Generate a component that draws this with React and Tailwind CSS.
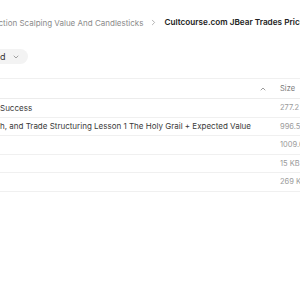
import React from 'react';
import { ChevronDown, ChevronUp, ChevronRight } from 'lucide-react';

const rows = [
  { name: 'Success', size: '277.2 KB' },
  { name: 'h, and Trade Structuring Lesson 1 The Holy Grail + Expected Value', size: '996.5 KB' },
  { name: '', size: '1009.6 KB' },
  { name: '', size: '15 KB' },
  { name: '', size: '269 KB' },
];

export default function App() {
  return (
    <div className="w-[300px] h-[300px] bg-white overflow-hidden font-['Inter',sans-serif]">
      {/* Breadcrumb */}
      <div className="h-[44px] flex items-center whitespace-nowrap -ml-[7px] pt-[1px]">
        <span className="text-[8px] text-[#8b8b8b]">Action Scalping Value And Candlesticks</span>
        <ChevronRight className="w-[9px] h-[9px] ml-[6px] mr-[6px] text-[#9a9a9a] shrink-0" strokeWidth={2} />
        <span className="text-[8.2px] font-semibold text-[#222]">Cultcourse.com JBear Trades Price Action</span>
      </div>

      {/* Filter pill */}
      <div className="h-[34px] flex items-start pt-[5px]">
        <div className="flex items-center gap-[6px] h-[15px] pl-[10px] pr-[8px] -ml-[10px] rounded-full bg-[#f3f3f3] text-[9px] text-[#333]">
          <span>d</span>
          <ChevronDown className="w-[8px] h-[8px] text-[#777]" strokeWidth={2} />
        </div>
      </div>

      {/* Table */}
      <div className="border-t border-[#f0f0f0]">
        <div className="h-[20px] flex items-center border-b border-[#ececec] whitespace-nowrap">
          <div className="flex-1" />
          <ChevronUp className="w-[8px] h-[8px] text-[#777] mr-[13px]" strokeWidth={2.2} />
          <div className="w-[20px] text-[7.5px] text-[#777]">Size</div>
        </div>
        {rows.map((r, i) => (
          <div key={i} className="h-[18.5px] flex items-center border-b border-[#f0f0f0] whitespace-nowrap">
            <div className="flex-1 text-[8px] text-[#3a3a3a]">{r.name}</div>
            <div className="w-[20px] text-[7.5px] text-[#9a9a9a]">{r.size}</div>
          </div>
        ))}
      </div>
    </div>
  );
}
